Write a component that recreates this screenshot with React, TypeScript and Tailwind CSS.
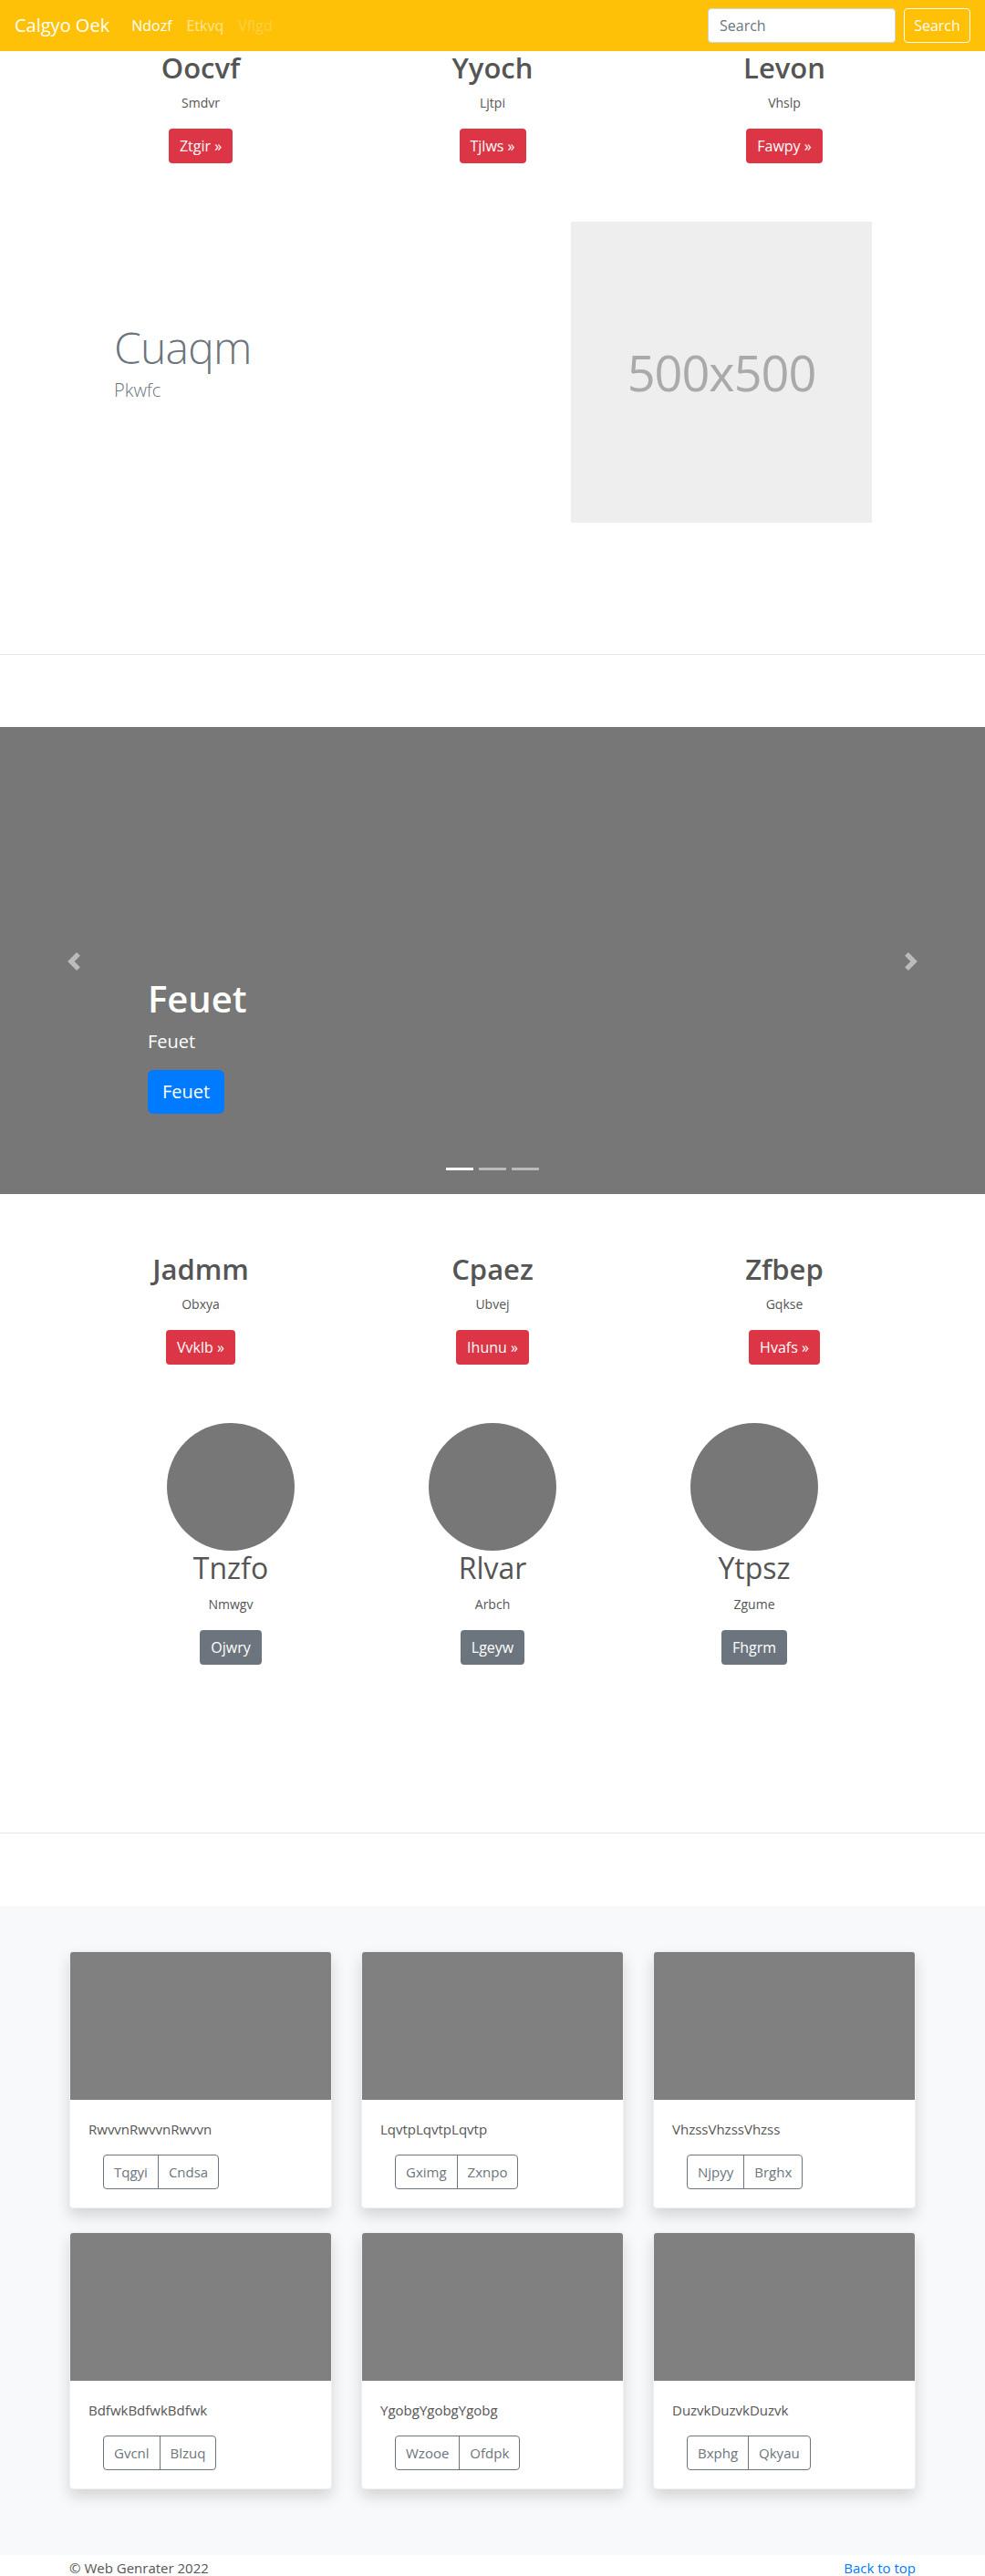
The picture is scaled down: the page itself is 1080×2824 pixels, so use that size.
import React from "react";

const topFeatures = [
  { title: "Oocvf", text: "Smdvr", btn: "Ztgir »" },
  { title: "Yyoch", text: "Ljtpi", btn: "Tjlws »" },
  { title: "Levon", text: "Vhslp", btn: "Fawpy »" },
];

const midFeatures = [
  { title: "Jadmm", text: "Obxya", btn: "Vvklb »" },
  { title: "Cpaez", text: "Ubvej", btn: "Ihunu »" },
  { title: "Zfbep", text: "Gqkse", btn: "Hvafs »" },
];

const people = [
  { name: "Tnzfo", text: "Nmwgv", btn: "Ojwry" },
  { name: "Rlvar", text: "Arbch", btn: "Lgeyw" },
  { name: "Ytpsz", text: "Zgume", btn: "Fhgrm" },
];

const cards = [
  { text: "RwvvnRwvvnRwvvn", a: "Tqgyi", b: "Cndsa" },
  { text: "LqvtpLqvtpLqvtp", a: "Gximg", b: "Zxnpo" },
  { text: "VhzssVhzssVhzss", a: "Njpyy", b: "Brghx" },
  { text: "BdfwkBdfwkBdfwk", a: "Gvcnl", b: "Blzuq" },
  { text: "YgobgYgobgYgobg", a: "Wzooe", b: "Ofdpk" },
  { text: "DuzvkDuzvkDuzvk", a: "Bxphg", b: "Qkyau" },
];

const Chevron = ({ flip }: { flip?: boolean }) => (
  <svg viewBox="0 0 8 8" className={`w-5 h-5 fill-white opacity-50 ${flip ? "rotate-180" : ""}`}>
    <path d="M5.25 0l-4 4 4 4 1.5-1.5L4.25 4l2.5-2.5L5.25 0z" />
  </svg>
);

const FeatureRow = ({ items }: { items: typeof topFeatures }) => (
  <div className="w-[960px] mx-auto grid grid-cols-3 text-center">
    {items.map((f) => (
      <div key={f.title} className="flex flex-col items-center">
        <h2 className="text-[31px] font-semibold leading-[1.2] mb-2 text-[#555]">{f.title}</h2>
        <p className="text-sm leading-6 mb-4 text-[#555]">{f.text}</p>
        <button className="bg-[#dc3545] text-white text-base leading-6 px-3 py-[7px] rounded">
          {f.btn}
        </button>
        <div className="h-4" />
      </div>
    ))}
  </div>
);

export default function App() {
  return (
    <div className="font-['Open_Sans',sans-serif] bg-white min-h-[2824px]">
      {/* Navbar */}
      <nav className="h-14 bg-[#ffc107] flex items-center px-4">
        <span className="text-xl text-white mr-4">Calgyo Oek</span>
        <div className="flex text-base">
          <span className="px-2 text-white">Ndozf</span>
          <span className="px-2 text-white/55">Etkvq</span>
          <span className="px-2 text-white/25">Vflgd</span>
        </div>
        <div className="ml-auto flex items-center">
          <div className="w-[206px] h-[38px] bg-white border border-[#ced4da] rounded px-3 flex items-center text-base text-[#6c757d] mr-[9px]">
            Search
          </div>
          <button className="h-[38px] w-[73px] border border-[#f8f9fa] rounded text-base text-[#f8f9fa]">
            Search
          </button>
        </div>
      </nav>

      {/* Marketing row */}
      <FeatureRow items={topFeatures} />

      {/* Featurette */}
      <div className="w-[960px] mx-auto mt-12 flex items-center">
        <div className="flex-1 pl-[65px]">
          <h2 className="text-[48px] font-light leading-none tracking-[-0.8px] text-[#6c757d] mb-2">Cuaqm</h2>
          <p className="text-xl font-light leading-[30px] text-[#6c757d] mb-4">Pkwfc</p>
        </div>
        <div className="w-[330px] h-[330px] bg-[#eeeeee] flex items-center justify-center mr-[64px]">
          <span className="text-[54px] text-[#aaaaaa] tracking-[-1px]">500x500</span>
        </div>
      </div>

      <hr className="mt-[144px] border-0 border-t border-[#e5e5e5]" />

      {/* Carousel */}
      <div className="relative mt-[79px] h-[512px] bg-[#777777]">
        <div className="absolute left-[71px] top-[247px]">
          <Chevron />
        </div>
        <div className="absolute right-[71px] top-[247px]">
          <Chevron flip />
        </div>
        <div className="absolute left-[162px] top-[274px] text-white">
          <h1 className="text-[40px] font-semibold leading-[48px] mb-2">Feuet</h1>
          <p className="text-xl leading-[30px] mb-4">Feuet</p>
          <button className="bg-[#007bff] text-white text-xl leading-[30px] px-4 py-[9px] rounded-md">
            Feuet
          </button>
        </div>
        <div className="absolute left-1/2 -translate-x-1/2 bottom-[26px] flex gap-[6px]">
          <span className="w-[30px] h-[3px] bg-white" />
          <span className="w-[30px] h-[3px] bg-white/50" />
          <span className="w-[30px] h-[3px] bg-white/50" />
        </div>
      </div>

      {/* Second marketing row */}
      <div className="mt-16">
        <FeatureRow items={midFeatures} />
      </div>

      {/* People */}
      <div className="w-[861px] mx-auto mt-12 grid grid-cols-3 text-center">
        {people.map((p) => (
          <div key={p.name} className="flex flex-col items-center">
            <div className="w-[140px] h-[140px] rounded-full bg-[#777777]" />
            <h2 className="text-[32px] font-normal leading-[1.2] mb-2 text-[#555]">{p.name}</h2>
            <p className="text-sm leading-6 mb-4 text-[#555]">{p.text}</p>
            <button className="bg-[#6c757d] text-white text-base leading-6 px-3 py-[7px] rounded">
              {p.btn}
            </button>
          </div>
        ))}
      </div>

      <hr className="mt-[184px] border-0 border-t border-[#e5e5e5]" />

      {/* Album */}
      <section className="mt-20 bg-[#f8f9fa] pt-[49px] pb-[72px]">
        <div className="w-[928px] mx-auto grid grid-cols-3 gap-x-8 gap-y-[26px]">
          {cards.map((c) => (
            <div
              key={c.text}
              className="bg-white rounded overflow-hidden border border-black/[0.06] shadow-[0_8px_16px_rgba(0,0,0,0.15)]"
            >
              <div className="h-[162px] bg-[#808080]" />
              <div className="p-5">
                <p className="text-[15px] leading-6 mb-4 text-[#555]">{c.text}</p>
                <div className="ml-4 inline-flex border border-[#6c757d] rounded text-[15px] leading-5 text-[#6c757d]">
                  <span className="px-[11px] py-2">{c.a}</span>
                  <span className="px-[11px] py-2 border-l border-[#6c757d]">{c.b}</span>
                </div>
              </div>
            </div>
          ))}
        </div>
      </section>

      {/* Footer */}
      <footer className="w-[928px] mx-auto flex justify-between pt-[2px] pb-12 text-[15px] leading-6">
        <span className="text-[#555]">© Web Genrater 2022</span>
        <span className="text-[#007bff]">Back to top</span>
      </footer>
    </div>
  );
}
